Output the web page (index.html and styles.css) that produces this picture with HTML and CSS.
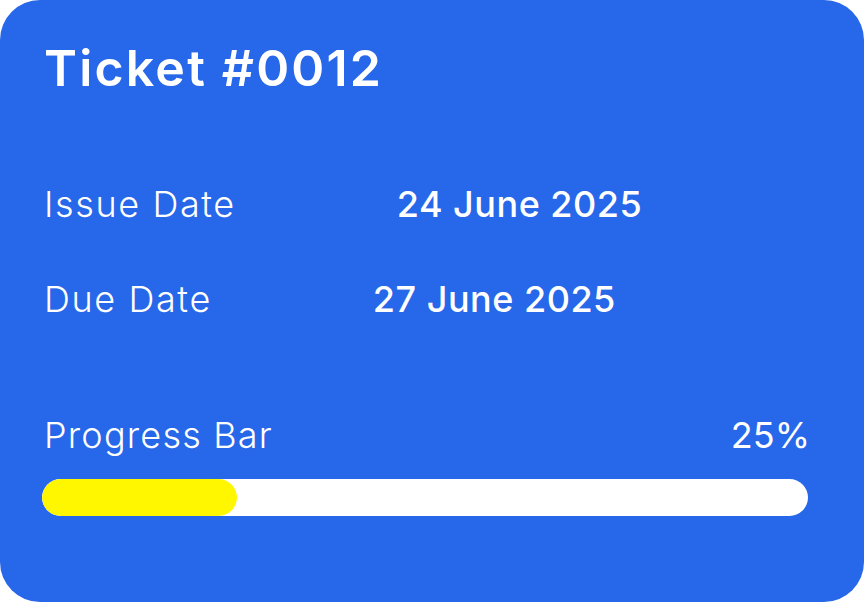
FILE: index.html
```html
<!DOCTYPE html>
<html lang="en">
<head>
    <meta charset="UTF-8">
    <meta name="viewport" content="width=device-width, initial-scale=1.0">
    <title>Ticket #0012</title>
    <link rel="stylesheet" href="styles.css">
</head>
<body>

    <div class="ticket-card">
        <h1 class="ticket-title">Ticket #0012</h1>

        <div class="ticket-row row-issue">
            <span class="row-label">Issue Date</span>
            <span class="row-value">24 June 2025</span>
        </div>

        <div class="ticket-row row-due">
            <span class="row-label">Due Date</span>
            <span class="row-value">27 June 2025</span>
        </div>

        <div class="progress-block">
            <div class="progress-head">
                <span class="row-label progress-label">Progress Bar</span>
                <span class="progress-percent">25%</span>
            </div>
            <div class="progress-track">
                <div class="progress-fill" style="width: 25.5%"></div>
            </div>
        </div>
    </div>

</body>
</html>
```

FILE: styles.css
```css
body {
    font-family: 'Inter', 'Noto Sans', sans-serif;
    background-color: #ffffff;
    margin: 0;
    padding: 0;
}

.ticket-card {
    box-sizing: border-box;
    width: 864px;
    height: 602px;
    background-color: #2767e9;
    border-radius: 40px;
    padding: 38px 56px 0 42px;
    color: #ffffff;
}

.ticket-title {
    font-size: 50px;
    font-weight: 600;
    letter-spacing: 2.2px;
    line-height: 60px;
    margin: 0 0 0 2px;
}

.ticket-row {
    display: flex;
    gap: 161px;
    align-items: center;
    font-size: 36px;
    line-height: 44px;
    padding-left: 2px;
}

.row-issue {
    margin-top: 84px;
}

.row-due {
    margin-top: 51px;
}

.row-label {
    font-weight: 300;
    letter-spacing: 1.6px;
}

.row-value {
    font-weight: 500;
    letter-spacing: 0.5px;
}

.progress-block {
    margin-top: 92px;
}

.progress-head {
    display: flex;
    justify-content: space-between;
    align-items: center;
    font-size: 36px;
    line-height: 44px;
    padding-left: 2px;
}

.progress-label {
    letter-spacing: 1.2px;
}

.progress-percent {
    font-weight: 400;
    margin-right: -2px;
}

.progress-track {
    margin-top: 22px;
    height: 37px;
    background-color: #ffffff;
    border-radius: 19px;
    overflow: hidden;
}

.progress-fill {
    height: 100%;
    background-color: #fff700;
    border-radius: 19px;
}
```
